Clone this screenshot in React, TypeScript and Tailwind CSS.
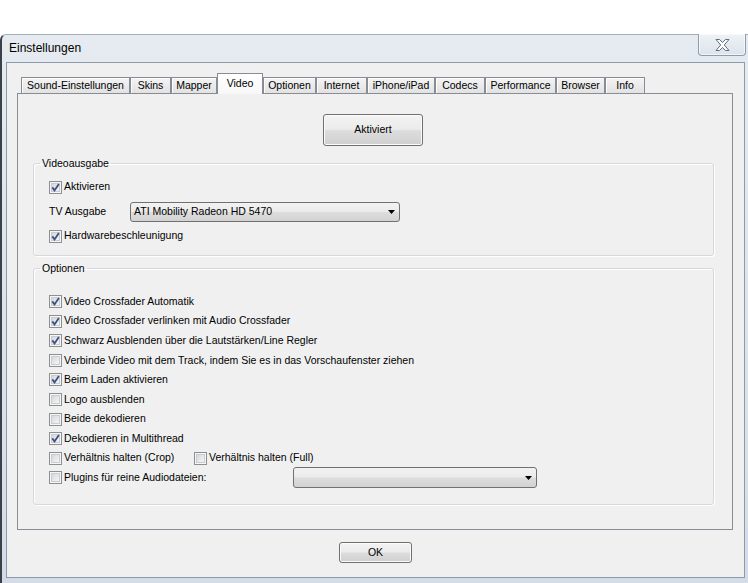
import React from 'react';

type Tab = { label: string; w: string; active?: boolean };

const tabs: Tab[] = [
  { label: 'Sound-Einstellungen', w: 'w-[109px]' },
  { label: 'Skins', w: 'w-[41px]' },
  { label: 'Mapper', w: 'w-[46px]' },
  { label: 'Video', w: 'w-[46px]', active: true },
  { label: 'Optionen', w: 'w-[53px]' },
  { label: 'Internet', w: 'w-[51px]' },
  { label: 'iPhone/iPad', w: 'w-[68px]' },
  { label: 'Codecs', w: 'w-[50px]' },
  { label: 'Performance', w: 'w-[71px]' },
  { label: 'Browser', w: 'w-[49px]' },
  { label: 'Info', w: 'w-[40px]' },
];

const options: { label: string; checked: boolean }[] = [
  { label: 'Video Crossfader Automatik', checked: true },
  { label: 'Video Crossfader verlinken mit Audio Crossfader', checked: true },
  { label: 'Schwarz Ausblenden über die Lautstärken/Line Regler', checked: true },
  { label: 'Verbinde Video mit dem Track, indem Sie es in das Vorschaufenster ziehen', checked: false },
  { label: 'Beim Laden aktivieren', checked: true },
  { label: 'Logo ausblenden', checked: false },
  { label: 'Beide dekodieren', checked: false },
  { label: 'Dekodieren in Multithread', checked: true },
];

const btnFace =
  'bg-[linear-gradient(#f3f3f3_0%,#ebebeb_48%,#dddddd_52%,#cfcfcf_100%)] border border-[#707070] rounded-[3px] shadow-[inset_0_0_0_1px_#fbfbfb]';

function CheckBox({ checked }: { checked: boolean }) {
  return (
    <svg width="13" height="13" viewBox="0 0 13 13" className="shrink-0">
      <defs>
        <linearGradient id="cbFill" x1="0" y1="0" x2="1" y2="1">
          <stop offset="0" stopColor="#d3d6da" />
          <stop offset="1" stopColor="#f7f7f7" />
        </linearGradient>
      </defs>
      <rect x="0.5" y="0.5" width="12" height="12" fill="#f6f6f6" stroke="#8e8f8f" />
      <rect x="2.5" y="2.5" width="8" height="8" fill="url(#cbFill)" stroke="#c9ccd0" />
      {checked && (
        <path d="M3.3 6.4 L5.5 9.4 L9.9 2.9" fill="none" stroke="#3d5185" strokeWidth="1.8" />
      )}
    </svg>
  );
}

function Check({ label, checked, className = '' }: { label: string; checked: boolean; className?: string }) {
  return (
    <label className={`flex items-center gap-[2px] ${className}`}>
      <CheckBox checked={checked} />
      <span className="whitespace-nowrap">{label}</span>
    </label>
  );
}

function Combo({ value, className = '' }: { value: string; className?: string }) {
  return (
    <div
      className={`flex items-center rounded-[3px] border border-[#707070] bg-[linear-gradient(#f2f2f2_0%,#ebebeb_48%,#dddddd_52%,#d2d2d2_100%)] pl-[3px] pr-[4px] ${className}`}
    >
      <span className="flex-1 whitespace-nowrap">{value}</span>
      <svg width="7" height="4" viewBox="0 0 7 4">
        <path d="M0 0h7L3.5 4z" fill="#000" />
      </svg>
    </div>
  );
}

function GroupBox({ title, className = '', children }: { title: string; className?: string; children: React.ReactNode }) {
  return (
    <fieldset
      className={`ml-[15px] w-[681px] rounded-[3px] border border-[#d5d9dd] pl-[6px] shadow-[inset_1px_1px_0_#ffffff,1px_1px_0_#ffffff] ${className}`}
    >
      <legend className="px-[2px] leading-[13px]">{title}</legend>
      {children}
    </fieldset>
  );
}

export default function App() {
  return (
    <div className="w-[748px] h-[583px] overflow-hidden bg-white pt-[34px] font-['Liberation_Sans',Arial,sans-serif] text-[10.5px] text-black">
      <div className="flex h-[549px] flex-col rounded-tl-[6px] border-l-2 border-t border-l-[#3b4148] border-t-[#a3afbc] bg-[linear-gradient(#e5ebf1,#d4dde7)]">
        {/* title bar */}
        <div className="flex h-[27px] items-start">
          <span className="ml-[7px] mt-[6px] text-[12px] leading-[15px]">Einstellungen</span>
          <div className="ml-auto mr-[2px] -mt-px flex h-[22px] w-[48px] items-center justify-center rounded-b-[4px] border border-t-0 border-[#8f9cab] bg-[linear-gradient(#eef2f6,#dde4ec)] shadow-[inset_0_0_0_1px_rgba(255,255,255,0.6)]">
            <svg width="15" height="12" viewBox="0 0 15 12">
              <path
                d="M1 0.5h3.6l2.9 3 2.9-3H14L9.3 6 14 11.5h-3.6l-2.9-3-2.9 3H1L5.7 6z"
                fill="#ffffff"
                stroke="#5f6c7b"
                strokeWidth="1"
                strokeLinejoin="round"
              />
            </svg>
          </div>
        </div>

        {/* client area */}
        <div className="ml-[4px] mr-[3px] mb-[5px] flex flex-1 flex-col border border-[#8d9aa8] bg-[#f0f0f0]">
          <div className="ml-[10px] mt-[10px] w-[716px]">
            <div className="relative z-10 -mb-px flex h-[21px] items-end pl-[4px]">
              {tabs.map((t) =>
                t.active ? (
                  <div
                    key={t.label}
                    className={`${t.w} flex h-[21px] justify-center border border-b-0 border-[#898c95] bg-[linear-gradient(#ffffff,#f7f7f7)] pt-[2px]`}
                  >
                    {t.label}
                  </div>
                ) : (
                  <div
                    key={t.label}
                    className={`${t.w} flex h-[17px] items-center justify-center border border-[#898c95] bg-[linear-gradient(#f4f4f4,#e2e2e2)] shadow-[inset_1px_1px_0_#fcfcfc]`}
                  >
                    {t.label}
                  </div>
                ),
              )}
            </div>

            <div className="flex h-[437px] flex-col border border-[#898c95] bg-[#f0f0f0] pt-[20px]">
              <button className={`ml-[305px] h-[32px] w-[100px] ${btnFace}`}>Aktiviert</button>

              <GroupBox title="Videoausgabe" className="mt-[11px] pb-[9px]">
                <div className="flex flex-col pl-[9px] pt-[7px]">
                  <Check label="Aktivieren" checked className="h-[20px]" />
                  <div className="mt-[5px] flex h-[20px] items-center">
                    <span className="w-[81px]">TV Ausgabe</span>
                    <Combo value="ATI Mobility Radeon HD 5470" className="h-[20px] w-[270px]" />
                  </div>
                  <Check label="Hardwarebeschleunigung" checked className="mt-[4px] h-[20px]" />
                </div>
              </GroupBox>

              <GroupBox title="Optionen" className="mt-[6px] pb-[17px]">
                <div className="flex flex-col pl-[9px] pt-[17px]">
                  {options.map((o) => (
                    <Check key={o.label} label={o.label} checked={o.checked} className="h-[19.56px]" />
                  ))}
                  <div className="flex h-[19.56px] items-center">
                    <Check label="Verhältnis halten (Crop)" checked={false} className="w-[145px]" />
                    <Check label="Verhältnis halten (Full)" checked={false} />
                  </div>
                  <div className="flex h-[19.56px] items-center">
                    <Check label="Plugins für reine Audiodateien:" checked={false} className="w-[244px]" />
                    <Combo value="" className="h-[21px] w-[244px]" />
                  </div>
                </div>
              </GroupBox>
            </div>
          </div>

          <div className="mt-[12px] flex justify-center">
            <button className={`h-[21px] w-[73px] ${btnFace}`}>OK</button>
          </div>
        </div>
      </div>
    </div>
  );
}
